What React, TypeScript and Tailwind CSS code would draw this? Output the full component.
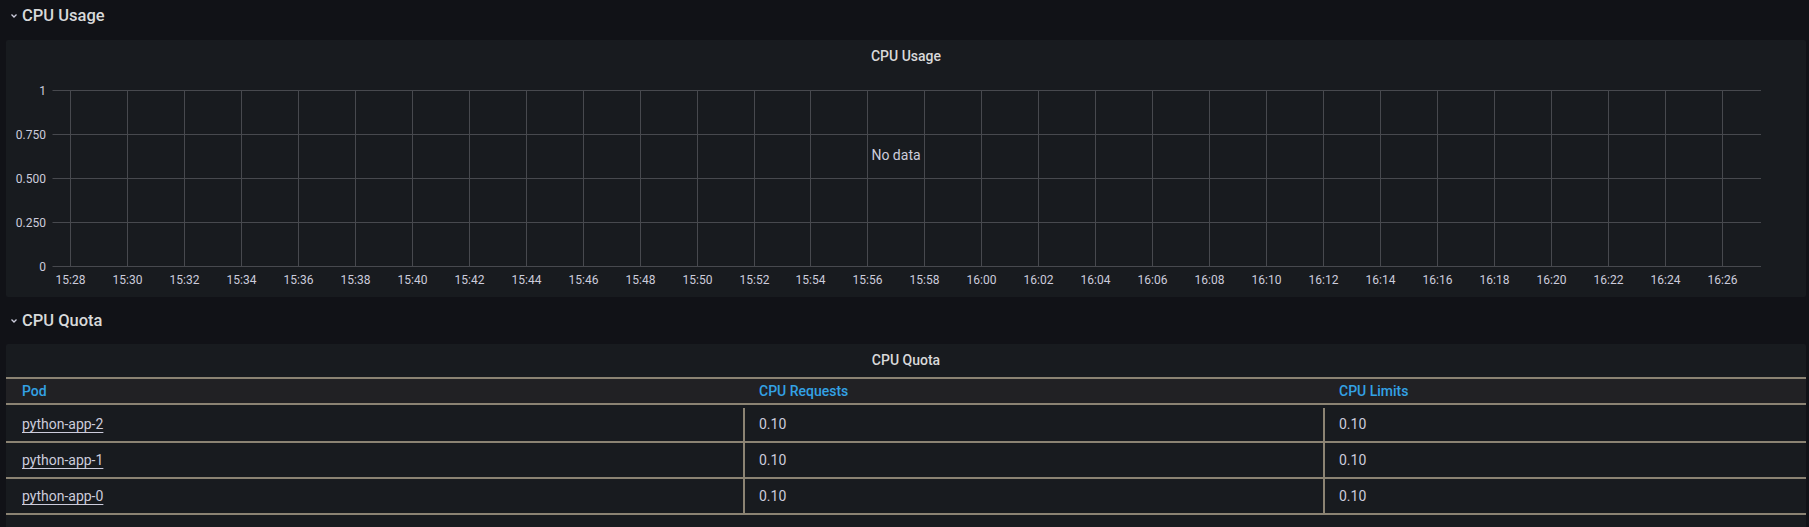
import React from "react";

const font = { fontFamily: "Roboto, 'Liberation Sans', sans-serif" };

const Chevron = () => (
  <svg width="8" height="8" viewBox="0 0 8 8" className="text-[#ccccdc]">
    <path d="M1.5 2.5 L4 5 L6.5 2.5" fill="none" stroke="currentColor" strokeWidth="1.3" />
  </svg>
);

const RowHeader = ({ title }: { title: string }) => (
  <div className="flex items-center h-8 pl-[10px] gap-[4px]">
    <Chevron />
    <span className="text-[16.5px] font-medium text-[#d8d9da]">{title}</span>
  </div>
);

const times = Array.from({ length: 30 }, (_, i) => {
  const m = 28 + i * 2;
  const h = 15 + Math.floor(m / 60);
  return `${h}:${String(m % 60).padStart(2, "0")}`;
});

const yTicks = [
  { y: 18.5, label: "1" },
  { y: 62.5, label: "0.750" },
  { y: 106.5, label: "0.500" },
  { y: 150.5, label: "0.250" },
  { y: 194.5, label: "0" },
];

const CpuChart = () => (
  <svg width="1800" height="225" viewBox="0 0 1800 225" className="block">
    {yTicks.map((t) => (
      <g key={t.label}>
        <line x1="46.5" x2="1755" y1={t.y} y2={t.y} stroke="#47494e" strokeWidth="1" />
        <text
          x="40"
          y={t.y}
          textAnchor="end"
          dominantBaseline="central"
          fontSize="12"
          fill="#ccccdc"
        >
          {t.label}
        </text>
      </g>
    ))}
    {times.map((t, i) => {
      const x = Math.round(64 + i * 56.96) + 0.5;
      return (
        <g key={t}>
          <line x1={x} x2={x} y1="18.5" y2="194.5" stroke="#47494e" strokeWidth="1" />
          <text x={x} y="208" textAnchor="middle" dominantBaseline="central" fontSize="12" fill="#ccccdc">
            {t}
          </text>
        </g>
      );
    })}
    <text x="890" y="83" textAnchor="middle" dominantBaseline="central" fontSize="14" fill="#ccccdc">
      No data
    </text>
  </svg>
);

const pods = ["python-app-2", "python-app-1", "python-app-0"];

const QuotaTable = () => (
  <div className="text-[14px]">
    <div className="grid grid-cols-[737px_580px_1fr] h-[28px] bg-[#212124] border-y-2 border-[#8b8373] items-center font-medium text-[#33a2e5]">
      <div className="pl-4">Pod</div>
      <div className="pl-4">CPU Requests</div>
      <div className="pl-4">CPU Limits</div>
    </div>
    {pods.map((p, i) => (
      <div
        key={p}
        className={`grid grid-cols-[737px_580px_1fr] border-b-2 border-[#8b8373] text-[#ccccdc] ${
          i === 0 ? "h-[38px] pt-[3px]" : "h-[36px]"
        }`}
      >
        <div className="pl-4 flex items-center">
          <span className="underline underline-offset-[3px] decoration-[#ccccdc]">{p}</span>
        </div>
        <div className="pl-[14px] flex items-center border-l-2 border-[#8b8373]">0.10</div>
        <div className="pl-[14px] flex items-center border-l-2 border-[#8b8373]">0.10</div>
      </div>
    ))}
  </div>
);

export default function App() {
  return (
    <div className="min-h-screen bg-[#111217] overflow-hidden" style={font}>
      <RowHeader title="CPU Usage" />
      <div className="mt-2 mx-[6px] w-[1800px] h-[257px] bg-[#181b1f] rounded-[2px]">
        <div className="h-8 flex items-center justify-center text-[14px] font-medium text-[#d8d9da]">
          CPU Usage
        </div>
        <CpuChart />
      </div>
      <div className="mt-2">
        <RowHeader title="CPU Quota" />
      </div>
      <div className="mt-[7px] mx-[6px] w-[1800px] h-[200px] bg-[#181b1f] rounded-[2px]">
        <div className="h-[33px] flex items-center justify-center text-[14px] font-medium text-[#d8d9da]">
          CPU Quota
        </div>
        <QuotaTable />
      </div>
    </div>
  );
}
